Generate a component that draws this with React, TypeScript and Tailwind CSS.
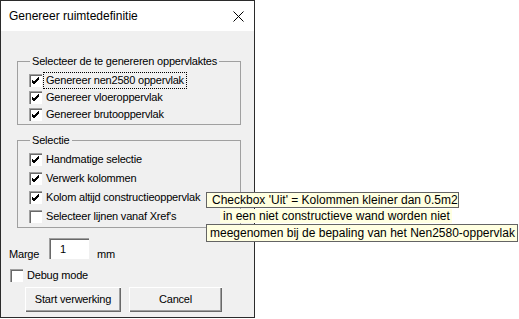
import React from "react";

const Check = ({ checked }: { checked: boolean }) => (
  <div className="w-[13px] h-[13px] bg-white shrink-0 shadow-[inset_1px_1px_0_#a0a0a0,inset_2px_2px_0_#696969,inset_-1px_-1px_0_#ffffff] border-0 flex items-center justify-center">
    {checked && (
      <svg width="13" height="13" viewBox="0 0 13 13">
        <path d="M3 6 L5 8 L10 3 M3 7 L5 9 L10 4 M3 8 L5 10 L10 5" stroke="#000" strokeWidth="1" fill="none" shapeRendering="crispEdges" />
      </svg>
    )}
  </div>
);

const Row = ({ label, checked, h, focus }: { label: string; checked: boolean; h: string; focus?: boolean }) => (
  <div className={`flex items-center ${h}`}>
    <div className="ml-[11px]">
      <Check checked={checked} />
    </div>
    <span className={`ml-[2px] px-[2px] leading-[15px] ${focus ? "outline outline-1 outline-dotted outline-black" : ""}`}>{label}</span>
  </div>
);

export default function App() {
  return (
    <div className="relative w-[519px] h-[319px] bg-white overflow-hidden" style={{ fontFamily: '"Liberation Sans", Arial, sans-serif' }}>
      <div className="w-[255px] h-[318px] border border-[#2b2b2b] flex flex-col bg-[#f0f0f0] text-[11px] tracking-[-0.2px] text-black">
        <div className="h-[30px] bg-white flex items-center justify-between pl-[8px] pr-[10px] shrink-0">
          <span className="text-[12px] tracking-normal">Genereer ruimtedefinitie</span>
          <svg width="11" height="11" viewBox="0 0 11 11">
            <path d="M0.5 0.5 L10.5 10.5 M10.5 0.5 L0.5 10.5" stroke="#000" strokeWidth="1" />
          </svg>
        </div>
        <div className="flex flex-col pl-[16px] pt-[23px]">
          <fieldset className="w-[224px] border border-[#a0a0a0] pb-[1px]">
            <legend className="ml-[12px] px-[2px] leading-[14px]">Selecteer de te genereren oppervlaktes</legend>
            <div className="flex flex-col pt-[4px]">
              <Row label="Genereer nen2580 oppervlak" checked h="h-[17px]" focus />
              <Row label="Genereer vloeroppervlak" checked h="h-[17px]" />
              <Row label="Genereer brutooppervlak" checked h="h-[17px]" />
            </div>
          </fieldset>
          <fieldset className="w-[224px] border border-[#a0a0a0] pb-[1px] mt-[8px]">
            <legend className="ml-[12px] px-[2px] leading-[14px]">Selectie</legend>
            <div className="flex flex-col pt-[3px]">
              <Row label="Handmatige selectie" checked h="h-[19px]" />
              <Row label="Verwerk kolommen" checked h="h-[19px]" />
              <Row label="Kolom altijd constructieoppervlak" checked h="h-[19px]" />
              <Row label="Selecteer lijnen vanaf Xref's" checked={false} h="h-[19px]" />
            </div>
          </fieldset>
        </div>
        <div className="flex items-start pl-[8px] mt-[10px] h-[21px]">
          <span className="mt-[8px] w-[40px]">Marge</span>
          <div className="w-[40px] h-[21px] bg-white shadow-[inset_1px_1px_0_#a0a0a0,inset_2px_2px_0_#696969,inset_-1px_-1px_0_#ffffff] pt-[3px] pl-[11px]">1</div>
          <span className="mt-[8px] ml-[8px]">mm</span>
        </div>
        <div className="flex items-center pl-[9px] mt-[10px] h-[13px]">
          <Check checked={false} />
          <span className="ml-[4px]">Debug mode</span>
        </div>
        <div className="flex pl-[24px] mt-[5px] gap-[8px]">
          <div className="w-[96px] h-[25px] flex items-center justify-center bg-[#f0f0f0] shadow-[inset_1px_1px_0_#ffffff,inset_-1px_-1px_0_#696969,inset_-2px_-2px_0_#a0a0a0]">Start verwerking</div>
          <div className="w-[93px] h-[25px] flex items-center justify-center bg-[#f0f0f0] shadow-[inset_1px_1px_0_#ffffff,inset_-1px_-1px_0_#696969,inset_-2px_-2px_0_#a0a0a0]">Cancel</div>
        </div>
      </div>

      <div className="absolute left-[206px] top-[192px] w-[253px] h-[16px] bg-[#ffffe1] border border-[#646464] text-[12px] leading-[14px] pl-[5px] whitespace-nowrap">
        Checkbox 'Uit' = Kolommen kleiner dan 0.5m2
      </div>
      <div className="absolute left-[220px] top-[209px] w-[232px] h-[14px] bg-[#ffffe1] text-[12px] leading-[14px] pl-[3px] whitespace-nowrap">
        in een niet constructieve wand worden niet
      </div>
      <div className="absolute left-[206px] top-[224px] w-[312px] h-[18px] bg-[#ffffe1] border border-[#646464] text-[12px] leading-[16px] pl-[3px] whitespace-nowrap">
        meegenomen bij de bepaling van het Nen2580-oppervlak
      </div>
    </div>
  );
}
